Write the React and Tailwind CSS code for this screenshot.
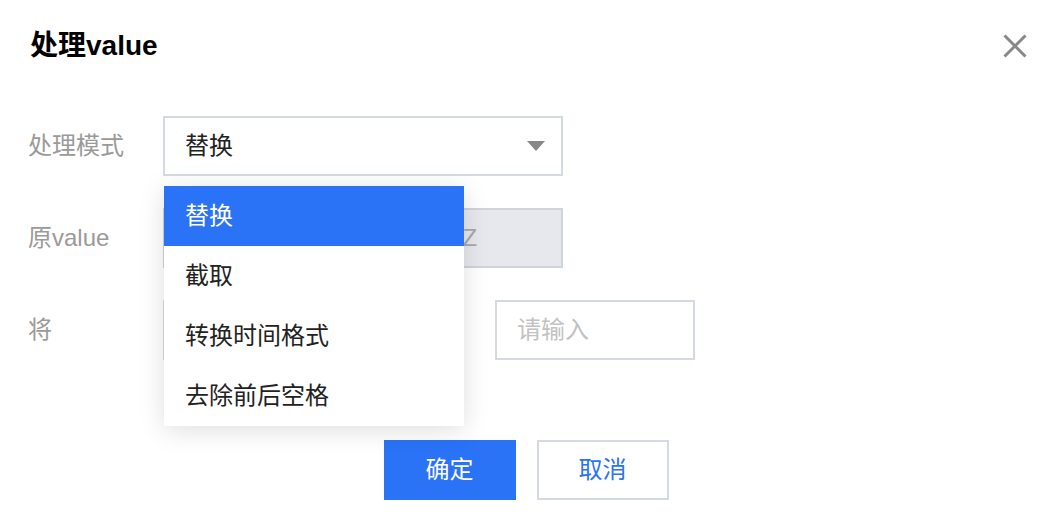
export default function App() {
  const font = { fontFamily: '"Liberation Sans", "Noto Sans CJK SC", sans-serif' };
  return (
    <div style={font} className="w-[1052px] h-[518px] bg-white flex flex-col overflow-hidden">
      <div className="h-[92px] flex items-center justify-between pl-[30px] pr-[25px]">
        <div className="text-[28px] font-bold text-black leading-none">处理value</div>
        <svg width="24" height="24" viewBox="0 0 24 24" className="text-[#888]">
          <path d="M1.5 1.5 L22.5 22.5 M22.5 1.5 L1.5 22.5" stroke="currentColor" strokeWidth="3" fill="none" />
        </svg>
      </div>
      <div className="mt-[24px] pl-[28px] flex flex-col gap-[32px]">
        <div className="flex items-center h-[60px]">
          <div className="w-[135px] text-[24px] text-[#9a9a9a] leading-none">处理模式</div>
          <div className="relative">
            <div className="w-[400px] h-[60px] border-2 border-[#d5d9e1] flex items-center justify-between pl-[20px] pr-[16px]">
              <span className="text-[24px] text-[#222] leading-none">替换</span>
              <svg width="18" height="10" viewBox="0 0 18 10"><path d="M0 0 H18 L9 10 Z" fill="#888" /></svg>
            </div>
            <div className="absolute top-[70px] left-[1px] w-[300px] bg-white shadow-[0_4px_24px_rgba(0,0,0,0.13)] z-10 flex flex-col">
              <div className="h-[60px] flex items-center pl-[21px] bg-[#2a72f6] text-white text-[24px] leading-none">替换</div>
              <div className="h-[60px] flex items-center pl-[21px] text-[#222] text-[24px] leading-none">截取</div>
              <div className="h-[60px] flex items-center pl-[21px] text-[#222] text-[24px] leading-none">转换时间格式</div>
              <div className="h-[60px] flex items-center pl-[21px] text-[#222] text-[24px] leading-none">去除前后空格</div>
            </div>
          </div>
        </div>
        <div className="flex items-center h-[60px]">
          <div className="w-[135px] text-[24px] text-[#9a9a9a] leading-none">原value</div>
          <div className="w-[400px] h-[60px] border-2 border-[#cfd3da] bg-[#e6e8ed] flex items-center pl-[20px] overflow-hidden">
            <span className="text-[24px] text-[#a8a8a8] leading-none whitespace-nowrap">2021-01-01T00:00:00.000Z</span>
          </div>
        </div>
        <div className="flex items-center h-[60px]">
          <div className="w-[135px] text-[24px] text-[#9a9a9a] leading-none">将</div>
          <div className="w-[300px] h-[60px] border-2 border-[#d5d9e1]"></div>
          <div className="w-[32px]"></div>
          <div className="w-[200px] h-[60px] border-2 border-[#d5d9e1] flex items-center pl-[20px]">
            <span className="text-[24px] text-[#c2c2c2] leading-none">请输入</span>
          </div>
        </div>
      </div>
      <div className="mt-[80px] flex justify-center gap-[21px]">
        <div className="w-[132px] h-[60px] bg-[#2a72f6] text-white text-[24px] flex items-center justify-center leading-none">确定</div>
        <div className="w-[132px] h-[60px] border-2 border-[#d5d9e1] text-[#2a72f6] text-[24px] flex items-center justify-center leading-none">取消</div>
      </div>
    </div>
  );
}
